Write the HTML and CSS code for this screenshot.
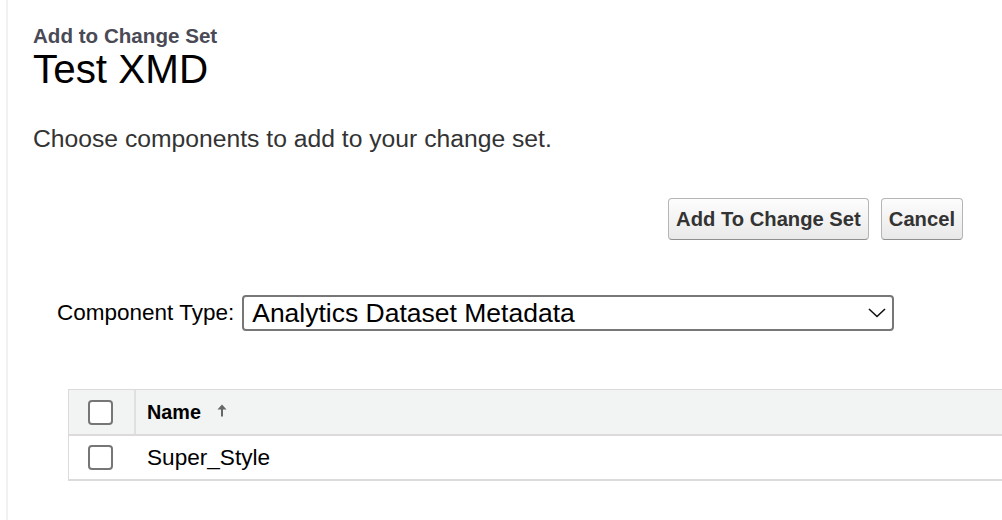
FILE: index.html
```html
<!DOCTYPE html>
<html>
<head>
<meta charset="utf-8">
<link rel="stylesheet" href="styles.css">
</head>
<body>
<div class="page">
  <div class="subtitle">Add to Change Set</div>
  <h1 class="title">Test XMD</h1>
  <p class="intro">Choose components to add to your change set.</p>
  <div class="actions">
    <button class="btn">Add To Change Set</button>
    <button class="btn">Cancel</button>
  </div>
  <div class="type-row">
    <span class="type-label">Component Type:</span>
    <div class="select">
      <span class="select-value">Analytics Dataset Metadata</span>
      <svg class="chev" width="18" height="10" viewBox="0 0 18 10"><polyline points="1,1 9,8.5 17,1" fill="none" stroke="#111" stroke-width="1.6"/></svg>
    </div>
  </div>
  <div class="table">
    <div class="row head">
      <div class="cell check"><span class="box"></span></div>
      <div class="cell name">Name
        <svg class="sort" width="10" height="13" viewBox="0 0 10 13"><path d="M5 0.5 L9.5 5.5 L6 5.5 L6 12.5 L4 12.5 L4 5.5 L0.5 5.5 Z" fill="#666"/></svg>
      </div>
    </div>
    <div class="row body-row">
      <div class="cell check"><span class="box"></span></div>
      <div class="cell name">Super_Style</div>
    </div>
  </div>
</div>
</body>
</html>
```
FILE: styles.css
```css
html, body {
  margin: 0;
  padding: 0;
  background: #fff;
  overflow: hidden;
}
body {
  width: 1002px;
  height: 520px;
  font-family: "Liberation Sans", Arial, sans-serif;
  color: #000;
}
.page {
  margin-left: 6px;
  border-left: 2px solid #f1f1f1;
  padding: 25px 0 0 25px;
  height: 495px;
}
.subtitle {
  font-size: 20.6px;
  line-height: 22px;
  font-weight: bold;
  color: #4a4a56;
}
.title {
  margin: 0;
  font-size: 40.4px;
  line-height: 44px;
  font-weight: normal;
  color: #000;
}
.intro {
  margin: 34px 0 0 0;
  font-size: 24.7px;
  line-height: 28px;
  color: #333;
}
.actions {
  display: flex;
  justify-content: flex-end;
  gap: 12px;
  margin-top: 45px;
  padding-right: 39px;
}
.btn {
  font-family: "Liberation Sans", Arial, sans-serif;
  font-size: 20.2px;
  font-weight: bold;
  color: #333;
  height: 42px;
  padding: 0 7px;
  border: 1px solid #b5b5b5;
  border-bottom-color: #8f8f8f;
  border-radius: 4px;
  background: linear-gradient(#fdfdfd, #e9e9e9);
}
.type-row {
  display: flex;
  align-items: center;
  gap: 8px;
  margin-top: 55px;
  padding-left: 24px;
}
.type-label {
  font-size: 22.5px;
  color: #000;
}
.select {
  height: 32px;
  border: 2px solid #777;
  border-radius: 4px;
  display: flex;
  align-items: center;
  justify-content: space-between;
  padding: 0 6px 0 8px;
  box-sizing: content-box;
  width: 634px;
}
.select-value {
  font-size: 26.5px;
  color: #000;
}
.chev {
  display: block;
}
.table {
  margin: 58px 0 0 35px;
  width: 940px;
  border-top: 1px solid #dddbda;
  border-left: 1px solid #dddbda;
}
.row {
  display: flex;
  border-bottom: 2px solid #dddbda;
}
.row.head {
  background: #f2f3f3;
  height: 44px;
}
.row.body-row {
  height: 43px;
}
.cell {
  display: flex;
  align-items: center;
}
.cell.check {
  width: 67px;
  padding-left: 19px;
  box-sizing: border-box;
}
.row.head .cell.check {
  border-right: 2px solid #e0e0e0;
}
.row.body-row .cell.check {
  width: 69px;
}
.box {
  width: 21px;
  height: 21px;
  border: 2px solid #767676;
  border-radius: 4px;
  background: #fff;
}
.row.body-row .cell.name {
  padding-left: 9px;
  font-size: 22.6px;
}
.row.head .cell.name {
  padding-left: 11px;
  font-size: 19.8px;
  font-weight: bold;
}
.sort {
  margin-left: 16px;
  margin-top: -3px;
}
```
